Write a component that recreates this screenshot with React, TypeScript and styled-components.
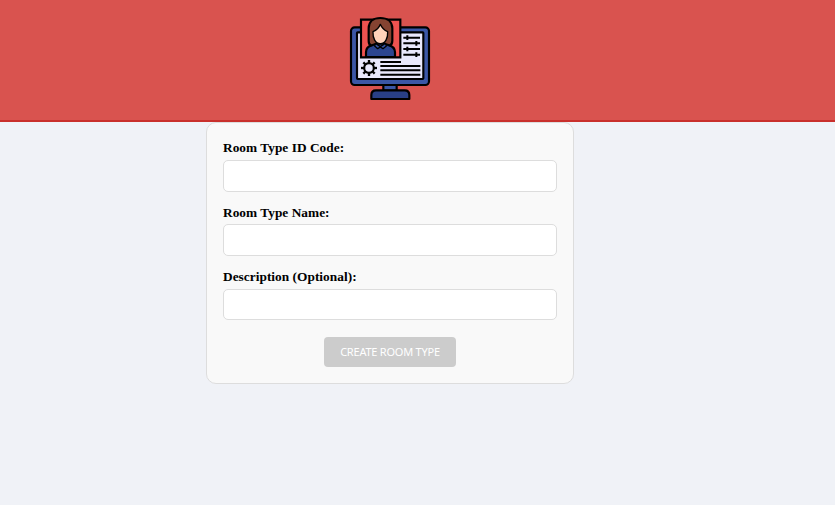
import React from 'react';
import styled, { createGlobalStyle } from 'styled-components';

const GlobalStyle = createGlobalStyle`
  * { box-sizing: border-box; }
  body { margin: 0; background: #f0f2f7; font-family: "Liberation Serif", "Times New Roman", serif; }
`;

const Header = styled.header`
  height: 122px;
  padding: 14px 55px 0 0;
  background: #d9534f;
  border-bottom: 2px solid #c9302c;
  display: flex;
  justify-content: center;
  align-items: flex-start;
`;

const Logo = styled.svg`
  display: block;
  width: 84px;
  height: 88px;
`;

const Main = styled.main`
  display: flex;
  justify-content: center;
  padding-right: 55px;
`;

const Form = styled.form`
  width: 368px;
  height: 262px;
  padding: 16.3px 16px 16px;
  background: #f9f9f9;
  border: 1px solid #ddd;
  border-radius: 10px;
  display: flex;
  flex-direction: column;
`;

const Field = styled.div`
  flex: none;
  height: 64.35px;
`;

const Label = styled.label`
  display: block;
  height: 20.7px;
  line-height: 18px;
  font-size: 13.33px;
  font-weight: bold;
  letter-spacing: 0.03px;
  color: #000;
`;

const Input = styled.input`
  display: block;
  width: 100%;
  height: 31.7px;
  padding: 0 8px;
  background: #fff;
  border: 1px solid #ddd;
  border-radius: 5px;
  outline: none;
`;

const Button = styled.button`
  flex: none;
  align-self: center;
  width: 132px;
  height: 30px;
  margin-top: 5px;
  padding: 0;
  border: 0;
  border-radius: 4px;
  background: #ccc;
  color: #fff;
  font: 11px/30px "Noto Sans", sans-serif;
  letter-spacing: -0.22px;
  white-space: nowrap;
`;

const FIELDS = [
  { id: 'code', label: 'Room Type ID Code:' },
  { id: 'name', label: 'Room Type Name:' },
  { id: 'description', label: 'Description (Optional):' },
];

const GEAR_ANGLES = [0, 45, 90, 135, 180, 225, 270, 315];

const MonitorLogo = () => (
  <Logo viewBox="0 0 252 264" stroke="#000" strokeWidth="6.5" strokeLinejoin="round" strokeLinecap="butt">
    <path d="M106 212h40v18h-40z" fill="#3b57a6" />
    <path d="M70 255v-12q0-14 14-14h86q14 0 14 14v12z" fill="#293f86" />
    <rect x="9" y="40" width="234" height="173" rx="11" fill="#3b57a6" />
    <rect x="27" y="55" width="199" height="140" rx="2" fill="#e9e8fc" />
    <path d="M39 17h118v113H39z" fill="#ef5350" strokeLinejoin="miter" />
    <path d="M70 95c-6-2-8-7-8-14V43c0-21 15-31 35-31s36 10 36 31v37c0 8-3 13-9 15z" fill="#854331" />
    <path d="M54 129v-14c0-14 7-19 18-21l13-5h24l14 5c12 3 18 9 18 21v14z" fill="#2c458f" />
    <path d="M83 88l14 10 15-10 3 8-10 8-8-5-8 5-9-8z" fill="#3b57a6" strokeWidth="4" />
    <path d="M75 53c11-4 18-11 22-22 5 12 11 18 22 22 1 20-7 36-22 36S74 73 75 53z" fill="#ffd2ba" strokeWidth="4" />
    <path d="M166 71h50M166 88h50M166 105h50M166 122h50" strokeWidth="6" />
    <path d="M178 64v14M205 81v14M178 98v14M205 115v14" strokeWidth="6" />
    <path d="M97 144h62M97 156h120M97 169h120M97 182h120" strokeWidth="6" />
    <circle cx="63" cy="162" r="14.5" fill="none" strokeWidth="6.5" />
    {GEAR_ANGLES.map((angle) => (
      <path key={angle} d="M63 147v-9" strokeWidth="7" transform={`rotate(${angle} 63 162)`} />
    ))}
  </Logo>
);

export default function App() {
  return (
    <>
      <GlobalStyle />
      <Header><MonitorLogo /></Header>
      <Main>
        <Form>
          {FIELDS.map(({ id, label }) => (
            <Field key={id}>
              <Label htmlFor={id}>{label}</Label>
              <Input id={id} />
            </Field>
          ))}
          <Button type="button" disabled>CREATE ROOM TYPE</Button>
        </Form>
      </Main>
    </>
  );
}
